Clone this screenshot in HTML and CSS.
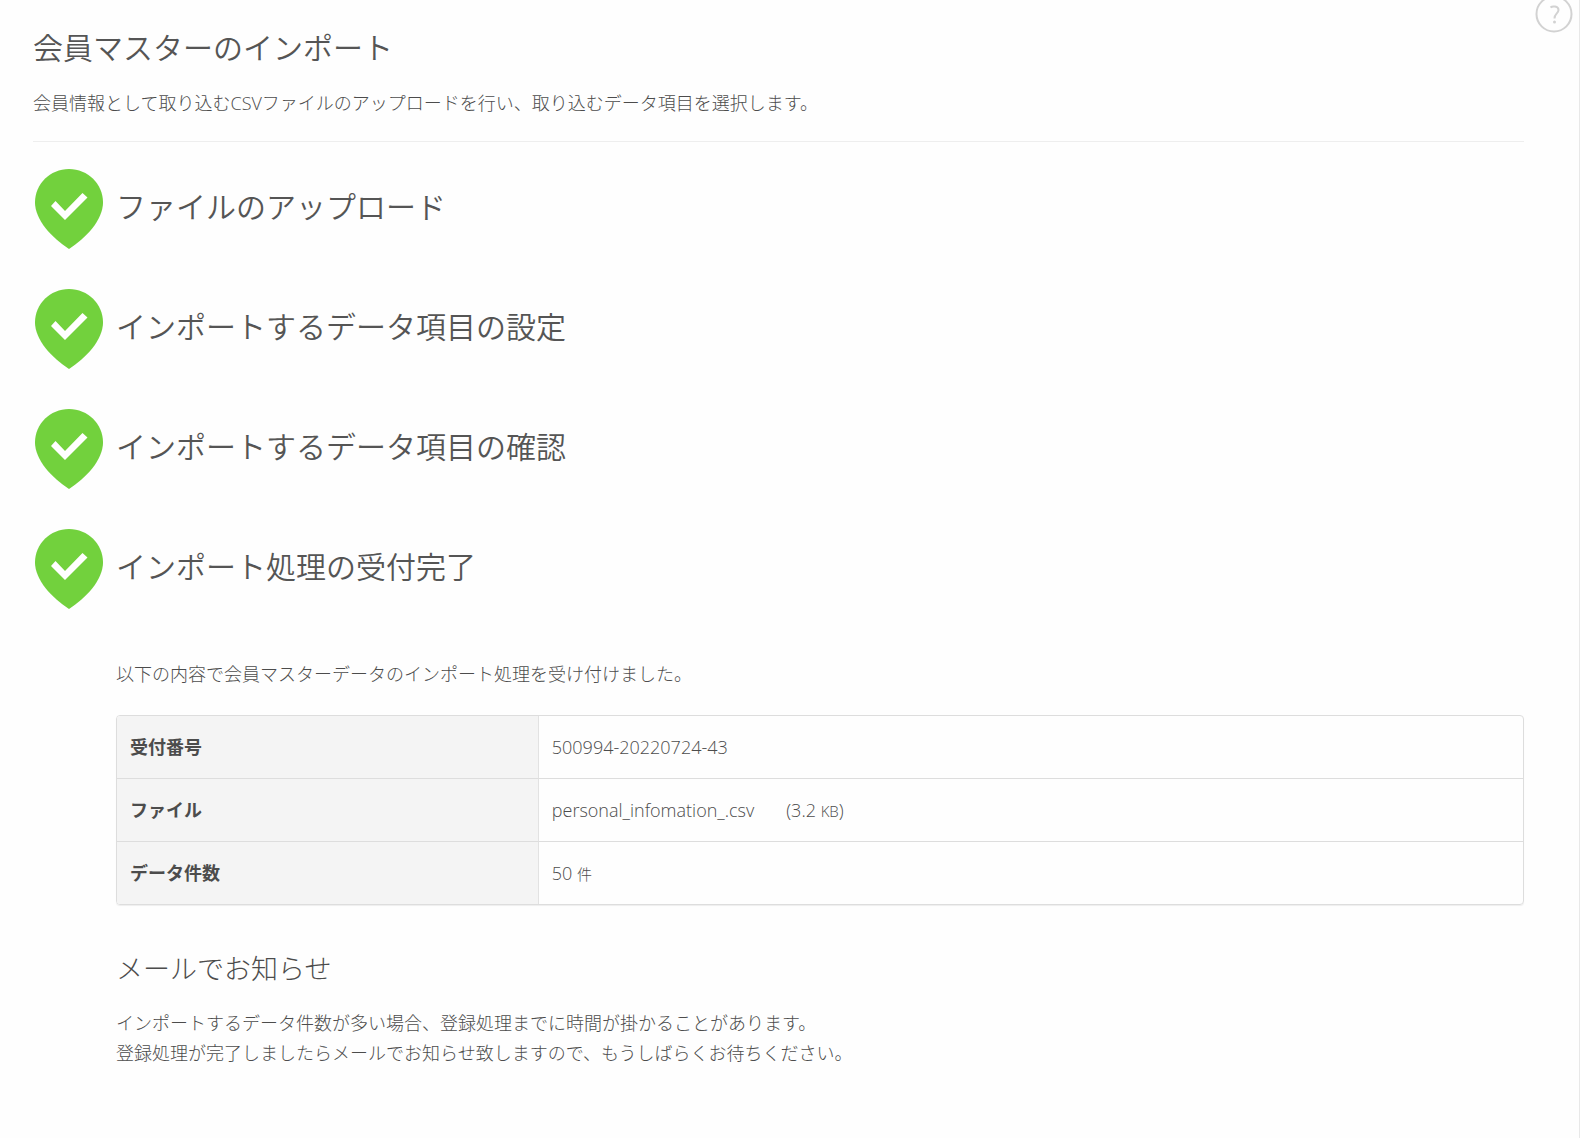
FILE: index.html
```html
<!DOCTYPE html>
<html lang="ja">

<head>
  <meta charset="UTF-8" />
  <meta name="viewport" content="width=device-width, initial-scale=1.0" />
  <title>会員マスターのインポート</title>
  <link rel="stylesheet" href="styles.css">
</head>

<body>
  <svg width="0" height="0" class="defs" aria-hidden="true">
    <symbol id="pin" viewBox="0 0 68 80">
      <path fill="#72d13d" d="M34 0C53 0 68 15 68 33.500C68 51 51 69 34 80C17 69 0 51 0 33.500C0 15 15 0 34 0Z" />
      <path fill="#fff" d="M16 37L20.500 32L30 42L47.500 24L52.500 28.500L30 51Z" />
    </symbol>
  </svg>

  <button type="button" class="help" aria-label="ヘルプ">
    <svg viewBox="0 0 38 38" fill="none" stroke="#d2d2d2" stroke-width="2">
      <circle cx="19" cy="19" r="17.500" />
      <path d="M15.500 12.500C17 11 23.500 10.500 23.500 15C23.500 18.500 19.500 18.500 19.500 23.500" />
      <circle cx="19.500" cy="27" r="1.500" fill="#d2d2d2" stroke="none" />
    </svg>
  </button>

  <main class="page">
    <header class="page-header">
      <h1>会員マスターのインポート</h1>
      <p>会員情報として取り込むCSVファイルのアップロードを行い、取り込むデータ項目を選択します。</p>
    </header>

    <section class="step">
      <svg class="pin"><use href="#pin" /></svg>
      <h2>ファイルのアップロード</h2>
    </section>
    <section class="step">
      <svg class="pin"><use href="#pin" /></svg>
      <h2>インポートするデータ項目の設定</h2>
    </section>
    <section class="step">
      <svg class="pin"><use href="#pin" /></svg>
      <h2>インポートするデータ項目の確認</h2>
    </section>
    <section class="step">
      <svg class="pin"><use href="#pin" /></svg>
      <h2>インポート処理の受付完了</h2>
    </section>

    <div class="result">
      <p>以下の内容で会員マスターデータのインポート処理を受け付けました。</p>

      <table>
        <tbody>
          <tr>
            <th scope="row">受付番号</th>
            <td>500994-20220724-43</td>
          </tr>
          <tr>
            <th scope="row">ファイル</th>
            <td>personal_infomation_.csv<span class="size">(3.2 <small>KB</small>)</span></td>
          </tr>
          <tr>
            <th scope="row">データ件数</th>
            <td>50 <small>件</small></td>
          </tr>
        </tbody>
      </table>

      <h3>メールでお知らせ</h3>
      <p>インポートするデータ件数が多い場合、登録処理までに時間が掛かることがあります。<br>
        登録処理が完了しましたらメールでお知らせ致しますので、もうしばらくお待ちください。</p>
    </div>
  </main>
</body>

</html>
```

FILE: styles.css
```css
* {
  box-sizing: border-box;
}

body {
  margin: 0;
  min-height: 100vh;
  background-color: #fefefe;
  border-right: 1px solid #e8e8e8;
  color: #4c4c4c;
  font-family: "Open Sans", "Noto Sans CJK JP", sans-serif;
  font-size: 18px;
  font-weight: 300;
  line-height: 30px;
}

h1, h2, h3, p {
  margin: 0;
}

h1, h2 {
  color: #555;
  font-weight: 350;
}

.defs {
  position: absolute;
}

.help {
  position: absolute;
  top: -5px;
  right: 7px;
  width: 38px;
  height: 38px;
  padding: 0;
  border: 0;
  background: none;
  cursor: pointer;
}

.help svg {
  display: block;
}

.page {
  padding: 30px 55px 70px 33px;
}

.page-header {
  margin-bottom: 27px;
  padding-bottom: 23px;
  border-bottom: 1px solid #eee;
}

h1 {
  margin-bottom: 22px;
  font-size: 30px;
  line-height: 36px;
}

.step {
  display: flex;
  align-items: center;
  gap: 13px;
  margin-bottom: 40px;
}

.pin {
  width: 68px;
  height: 80px;
  margin-left: 2px;
}

h2 {
  padding-bottom: 4px;
  font-size: 30px;
  line-height: 36px;
}

.result {
  padding: 10px 0 0 83px;
}

table {
  width: 100%;
  margin: 26px 0 48px;
  border: 1px solid #ddd;
  border-radius: 4px;
  border-spacing: 0;
  box-shadow: 0 1px 1px #eee;
  overflow: hidden;
}

th, td {
  height: 63px;
  padding: 0 13px;
  border-bottom: 1px solid #ddd;
  text-align: left;
}

th {
  width: 30%;
  border-right: 1px solid #e2e2e2;
  background-color: #f4f4f4;
  font-weight: 700;
}

tr:last-child th, tr:last-child td {
  height: 62px;
  border-bottom: 0;
}

small {
  font-size: 15px;
}

.size {
  margin-left: 32px;
}

h3 {
  margin-bottom: 23px;
  font-size: 27px;
  font-weight: 300;
  line-height: 32px;
}
```
